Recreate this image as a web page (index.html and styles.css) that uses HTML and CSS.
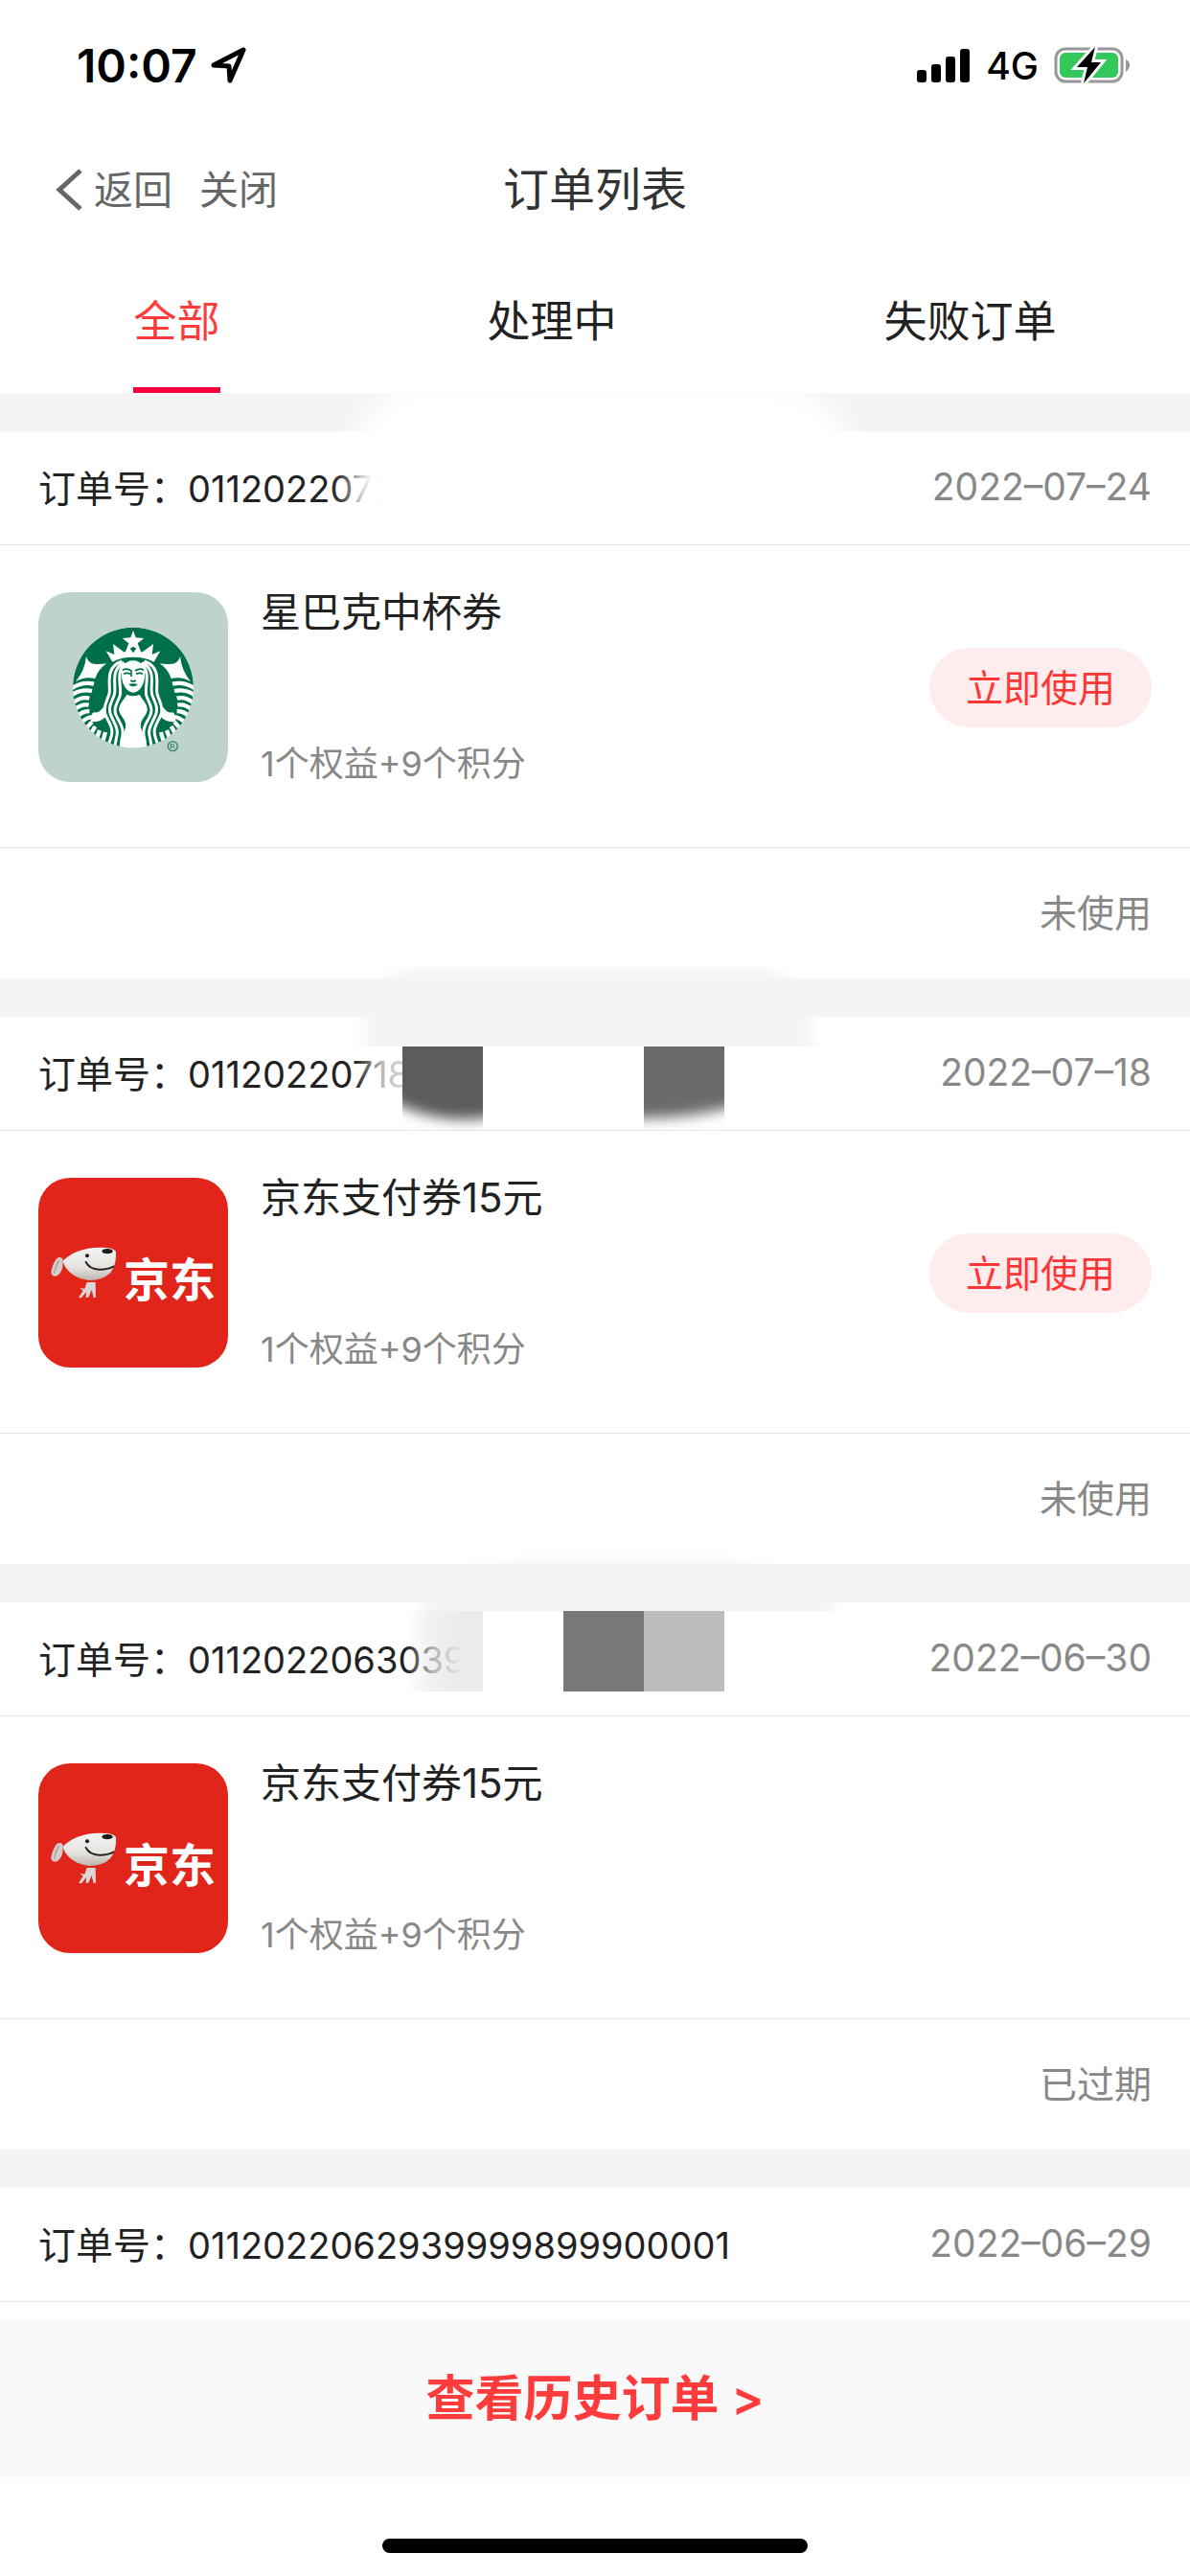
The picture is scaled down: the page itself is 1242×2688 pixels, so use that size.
FILE: index.html
```
<!DOCTYPE html>
<html lang="zh-CN">
<head>
    <meta charset="UTF-8">
    <meta name="viewport" content="width=device-width, initial-scale=1.0">
    <title>订单列表</title>
    <link rel="stylesheet" href="styles.css">
</head>
<body>
    <!-- shared logos -->
    <svg class="defs" aria-hidden="true">
        <symbol id="logo-jd" viewBox="0 15 594 594">
            <defs>
                <linearGradient id="dog" x1="0" y1="0" x2="0" y2="1">
                    <stop offset="0" stop-color="#f4f3f1"/>
                    <stop offset="0.6" stop-color="#e6e4e1"/>
                    <stop offset="1" stop-color="#bdb5b0"/>
                </linearGradient>
            </defs>
            <rect y="15" width="594" height="594" fill="#e1251b"/>
            <path d="M76 268 Q62 258 54 272 Q40 296 40 314 Q46 328 60 321 Q76 310 77 284 Z" fill="#d3cecb"/>
            <path d="M64 274 Q52 296 50 314" fill="none" stroke="#a79f9b" stroke-width="4"/>
            <path d="M152 342 L179 342 L180 390 L173 390 L167 366 L157 389 L149 390 L150 372 L135 391 L126 390 L140 368 L130 360 L145 362 Z" fill="#d9d6d3"/>
            <path d="M76 276 Q118 234 190 233 Q236 232 243 246 Q246 286 226 312 Q202 336 160 336 Q106 330 83 292 Z" fill="url(#dog)"/>
            <ellipse cx="216" cy="245" rx="17" ry="8" fill="#1d1a1a"/>
            <circle cx="153" cy="259" r="6" fill="#1d1a1a"/>
            <path d="M149 279 Q160 301 190 302 Q216 303 235 293" fill="none" stroke="#2a2626" stroke-width="6" stroke-linecap="round"/>
        </symbol>
        <symbol id="logo-starbucks" viewBox="0 24 594 594">
            <defs>
                <clipPath id="disc"><circle cx="297" cy="323" r="189"/></clipPath>
                <g id="siren-side">
                    <path d="M150 225 Q156 246 174 248 Q194 250 214 247 Q188 264 178 294 Q145 286 117 304 Q146 268 150 225 Z" fill="#fff"/>
                    <path d="M212 208 L238 219 L234 186 L270 212 L284 196 L297 214 L297 227 Q262 226 232 242 Z" fill="#fff"/>
                    <g fill="none" stroke="#fff" stroke-width="13">
                        <path d="M104 325 Q138 302 174 311"/>
                        <path d="M104 346 Q134 326 168 333"/>
                        <path d="M108 370 Q134 349 160 356"/>
                        <path d="M112 392 Q136 372 158 377"/>
                        <path d="M122 413 Q138 396 160 396"/>
                        <path d="M134 434 Q144 420 166 414"/>
                        <path d="M148 452 L168 430"/>
                        <path d="M164 468 L178 444"/>
                        <path d="M182 484 L192 456"/>
                        <path d="M200 498 L210 462"/>
                    </g>
                    <path d="M172 400 Q190 404 203 384 L213 410 Q198 431 166 430 Q160 414 172 400 Z" fill="#fff"/>
                    <g fill="none" stroke="#fff" stroke-width="9">
                        <path d="M262 240 C205 260 228 316 222 342 C216 364 202 380 209 404 C218 432 239 446 227 480 L218 508"/>
                        <path d="M268 244 C222 270 246 316 238 344 C230 368 218 382 226 406 C236 434 254 448 244 482 L238 516"/>
                        <path d="M272 246 C240 276 262 320 256 346 C248 372 234 386 243 408 C254 434 272 448 261 486 L257 520"/>
                    </g>
                </g>
            </defs>
            <rect y="24" width="594" height="594" fill="#bfd3cd"/>
            <g clip-path="url(#disc)">
                <circle cx="297" cy="323" r="189" fill="#00704a"/>
                <use href="#siren-side"/>
                <use href="#siren-side" transform="matrix(-1 0 0 1 594 0)"/>
                <path d="M297 144 L305 166 L331 168 L311 184 L320 208 L297 194 L274 208 L283 184 L263 168 L289 166 Z" fill="#fff"/>
                <path d="M297 238 C325 238 336 262 333 290 C330 318 314 337 297 338 C280 337 264 318 261 290 C258 262 269 238 297 238 Z" fill="#fff"/>
                <path d="M277 344 Q297 354 317 344 C326 362 344 374 341 396 C336 416 317 422 321 448 C330 474 338 492 332 518 L264 518 C258 492 264 474 273 448 C277 422 258 416 253 396 C250 374 268 362 277 344 Z" fill="#fff"/>
                <g fill="none" stroke="#00704a" stroke-width="5">
                    <path d="M264 268 Q277 260 291 270 L291 288"/>
                    <path d="M330 268 Q317 260 303 270"/>
                    <path d="M267 280 Q277 274 288 280 M306 280 Q317 274 327 280"/>
                    <path d="M289 300 Q297 306 305 300"/>
                </g>
                <path d="M282 312 Q297 308 312 312 Q297 326 282 312 Z" fill="#00704a"/>
            </g>
            <circle cx="421" cy="506" r="15" fill="none" stroke="#2e8064" stroke-width="4"/>
            <path d="M415 514 V499 H422 Q428 503 422 507 H416 M422 507 L427 514" fill="none" stroke="#2e8064" stroke-width="3"/>
        </symbol>
    </svg>

    <div class="status-bar">
        <div class="status-left">
            <span class="time">10:07</span>
            <svg class="arrow" viewBox="0 0 37 38"><path d="M34 3 L20 35 L19 20 L3 19 Z" fill="none" stroke="#000" stroke-width="5" stroke-linejoin="round"/></svg>
        </div>
        <div class="status-right">
            <svg class="signal" viewBox="0 0 56 35">
                <rect x="0" y="22" width="10" height="13" rx="3"/>
                <rect x="15" y="16" width="10" height="19" rx="3"/>
                <rect x="30" y="8" width="10" height="27" rx="3"/>
                <rect x="45" y="0" width="10" height="35" rx="3"/>
            </svg>
            <span class="network">4G</span>
            <svg class="battery" viewBox="0 0 80 40">
                <rect x="2" y="3" width="69" height="34" rx="10" fill="none" stroke="#98989b" stroke-width="3"/>
                <path d="M75 14 Q79 16 79 20 Q79 24 75 27 Z" fill="#98989b"/>
                <rect x="6" y="7" width="61" height="26" rx="6" fill="#34c759"/>
                <path d="M43 1 L24 22 L35 22 L31 39 L49 17 L39 17 Z" stroke="#fff" stroke-width="6"/>
                <path d="M43 1 L24 22 L35 22 L31 39 L49 17 L39 17 Z"/>
            </svg>
        </div>
    </div>

    <header class="nav">
        <div class="nav-left">
            <button class="nav-btn">
                <svg class="back" viewBox="0 0 28 44"><path d="M26 2 L4 22 L26 42" fill="none" stroke="#666" stroke-width="5"/></svg>
                返回
            </button>
            <button class="nav-btn">关闭</button>
        </div>
        <h1>订单列表</h1>
    </header>

    <nav class="tabs">
        <button class="tab active">全部</button>
        <button class="tab">处理中</button>
        <button class="tab">失败订单</button>
    </nav>

    <main class="orders">
        <section class="order">
            <div class="order-head">
                <div>订单号：<span class="order-no">0112022072</span></div>
                <time class="date">2022–07–24</time>
                <svg class="smudge" viewBox="0 0 600 210">
                    <defs>
                        <filter id="soft" x="-20%" y="-40%" width="140%" height="180%"><feGaussianBlur stdDeviation="12"/></filter>
                        <clipPath id="clip1"><rect y="31" width="600" height="156"/></clipPath>
                    </defs>
                    <g clip-path="url(#clip1)">
                        <path d="M28 220 V110 Q34 20 120 16 H440 Q540 26 546 90 V220 Z" fill="#fff" filter="url(#soft)"/>
                    </g>
                </svg>
            </div>
            <div class="order-body">
                <svg class="logo" role="img" aria-label="星巴克"><use href="#logo-starbucks"/></svg>
                <div class="info">
                    <h2>星巴克中杯券</h2>
                    <p>1个权益+9个积分</p>
                </div>
                <button class="use-btn">立即使用</button>
            </div>
            <div class="order-foot">未使用</div>
        </section>

        <section class="order">
            <div class="order-head">
                <div>订单号：<span class="order-no">01120220718</span></div>
                <time class="date">2022–07–18</time>
                <svg class="smudge" viewBox="0 0 600 210">
                    <defs>
                        <clipPath id="clip2"><rect y="18" width="600" height="84"/></clipPath>
                        <clipPath id="clip3"><path d="M80 102 H164 V210 H80 Z M332 102 H416 V210 H332 Z"/></clipPath>
                        <filter id="soft2" x="-20%" y="-40%" width="140%" height="180%"><feGaussianBlur stdDeviation="7"/></filter>
                        <linearGradient id="fade2"><stop offset="0" stop-color="#fff" stop-opacity="0"/><stop offset="0.5" stop-color="#fff" stop-opacity="0.7"/><stop offset="1" stop-color="#fff" stop-opacity="0.85"/></linearGradient>
                    </defs>
                    <rect x="30" y="110" width="60" height="72" fill="url(#fade2)"/>
                    <g clip-path="url(#clip2)">
                        <path d="M40 130 V60 Q60 18 120 18 H420 Q490 18 508 60 V130 Z" fill="#f4f4f4" filter="url(#soft2)"/>
                    </g>
                    <g clip-path="url(#clip3)">
                        <path d="M60 80 H180 V174 Q120 188 60 155 Z" fill="#5b5b5b" filter="url(#soft2)"/>
                        <path d="M310 80 H440 V160 Q380 180 310 176 Z" fill="#6a6a6a" filter="url(#soft2)"/>
                    </g>
                </svg>
            </div>
            <div class="order-body">
                <svg class="logo" role="img" aria-label="京东">
                    <use href="#logo-jd"/>
                    <text class="jd-name" x="89" y="124">京东</text>
                </svg>
                <div class="info">
                    <h2>京东支付券15元</h2>
                    <p>1个权益+9个积分</p>
                </div>
                <button class="use-btn">立即使用</button>
            </div>
            <div class="order-foot">未使用</div>
        </section>

        <section class="order">
            <div class="order-head">
                <div>订单号：<span class="order-no">0112022063039</span></div>
                <time class="date">2022–06–30</time>
                <svg class="smudge" viewBox="0 0 600 210">
                    <defs>
                        <clipPath id="clip4"><rect y="18" width="600" height="62"/></clipPath>
                        <linearGradient id="fade4"><stop offset="0" stop-color="#ebebeb" stop-opacity="0"/><stop offset="0.45" stop-color="#ebebeb" stop-opacity="0.7"/><stop offset="1" stop-color="#ebebeb"/></linearGradient>
                    </defs>
                    <g clip-path="url(#clip4)">
                        <path d="M102 100 V60 Q120 32 240 28 H400 Q480 32 530 60 V100 Z" fill="#f4f4f4" filter="url(#soft2)"/>
                    </g>
                    <rect x="84" y="80" width="58" height="84" fill="url(#fade4)"/>
                    <rect x="142" y="80" width="22" height="84" fill="#ebebeb"/>
                    <rect x="248" y="80" width="84" height="84" fill="#787878"/>
                    <rect x="332" y="80" width="84" height="84" fill="#bdbdbd"/>
                </svg>
            </div>
            <div class="order-body">
                <svg class="logo" role="img" aria-label="京东">
                    <use href="#logo-jd"/>
                    <text class="jd-name" x="89" y="124">京东</text>
                </svg>
                <div class="info">
                    <h2>京东支付券15元</h2>
                    <p>1个权益+9个积分</p>
                </div>
            </div>
            <div class="order-foot">已过期</div>
        </section>

        <section class="order">
            <div class="order-head">
                <div>订单号：<span class="order-no">0112022062939999899900001</span></div>
                <time class="date">2022–06–29</time>
            </div>
        </section>
    </main>

    <a class="history" href="#">查看历史订单 &gt;</a>
    <div class="home-area"><div class="home-bar"></div></div>
</body>
</html>
```
FILE: styles.css
```
* {
    box-sizing: border-box;
}
body {
    margin: 0;
    min-height: 100vh;
    display: flex;
    flex-direction: column;
    background: #fff;
    color: #222;
    font-family: Inter, "Noto Sans CJK SC", sans-serif;
    font-size: 39px;
}
h1, h2, p {
    margin: 0;
    font-weight: normal;
}
button {
    padding: 0;
    border: none;
    background: none;
    color: inherit;
    font-family: inherit;
    cursor: pointer;
}
.defs {
    position: absolute;
    width: 0;
    height: 0;
}

/* status bar */
.status-bar {
    display: flex;
    justify-content: space-between;
    align-items: center;
    height: 132px;
    padding: 4px 62px 0 80px;
    color: #000;
}
.status-left, .status-right {
    display: flex;
    align-items: center;
}
.time {
    font-size: 48px;
    font-weight: 600;
}
.arrow {
    width: 37px;
    height: 38px;
    margin-left: 14px;
}
.signal {
    width: 56px;
    height: 35px;
}
.network {
    margin: 0 16px;
    font-weight: 500;
}
.battery {
    width: 80px;
    height: 40px;
}

/* title row */
.nav {
    display: grid;
    grid-template-columns: 1fr auto 1fr;
    align-items: center;
    height: 132px;
    padding: 0 58px;
}
.nav-left {
    display: flex;
    gap: 28px;
}
.nav-btn {
    display: flex;
    align-items: center;
    gap: 12px;
    font-size: 41px;
    line-height: 60px;
    color: #666;
}
.back {
    width: 28px;
    height: 44px;
}
.nav h1 {
    font-size: 48px;
    line-height: 72px;
    color: #333;
}

/* tabs */
.tabs {
    display: flex;
    justify-content: space-around;
    height: 146px;
}
.tab {
    padding-bottom: 4px;
    border-bottom: 6px solid transparent;
    font-size: 45px;
}
.tab.active {
    color: #ff3b3b;
    border-bottom-color: #f5003a;
}

/* order list */
.orders {
    flex: 1;
}
.order {
    border-top: 40px solid #f4f4f4;
}
.order-head {
    position: relative;
    display: flex;
    justify-content: space-between;
    align-items: center;
    height: 119px;
    padding: 0 40px 4px;
    border-bottom: 1px solid #e8e8e8;
}
.order-no {
    font-size: 38px;
}
.date {
    color: #888;
}
.smudge {
    position: absolute;
    top: -71px;
    left: 340px;
    width: 600px;
    height: 210px;
}
.order-body {
    display: flex;
    align-items: center;
    gap: 34px;
    padding: 49px 40px 68px;
    border-bottom: 1px solid #e8e8e8;
}
.logo {
    width: 198px;
    height: 198px;
    border-radius: 33px;
}
.jd-name {
    font-size: 48px;
    font-weight: bold;
    fill: #fff;
}
.info {
    flex: 1;
    display: flex;
    flex-direction: column;
    justify-content: space-between;
    height: 198px;
}
.info h2 {
    font-size: 42px;
    line-height: 42px;
}
.info p {
    font-size: 36px;
    line-height: 38px;
    color: #888;
}
.use-btn {
    padding: 0 38px;
    border-radius: 42px;
    background: #ffecec;
    color: #ff3636;
    font-size: 39px;
    line-height: 83px;
}
.order-foot {
    padding: 0 40px;
    line-height: 136px;
    text-align: right;
    color: #888;
}

/* bottom link and home indicator */
.history {
    background: #f9f9f9;
    color: #ff3b3b;
    font-size: 51px;
    font-weight: 600;
    line-height: 165px;
    text-align: center;
    text-decoration: none;
}
.home-area {
    padding: 64px 0 24px;
}
.home-bar {
    width: 444px;
    height: 15px;
    margin: 0 auto;
    border-radius: 8px;
    background: #000;
}
```
